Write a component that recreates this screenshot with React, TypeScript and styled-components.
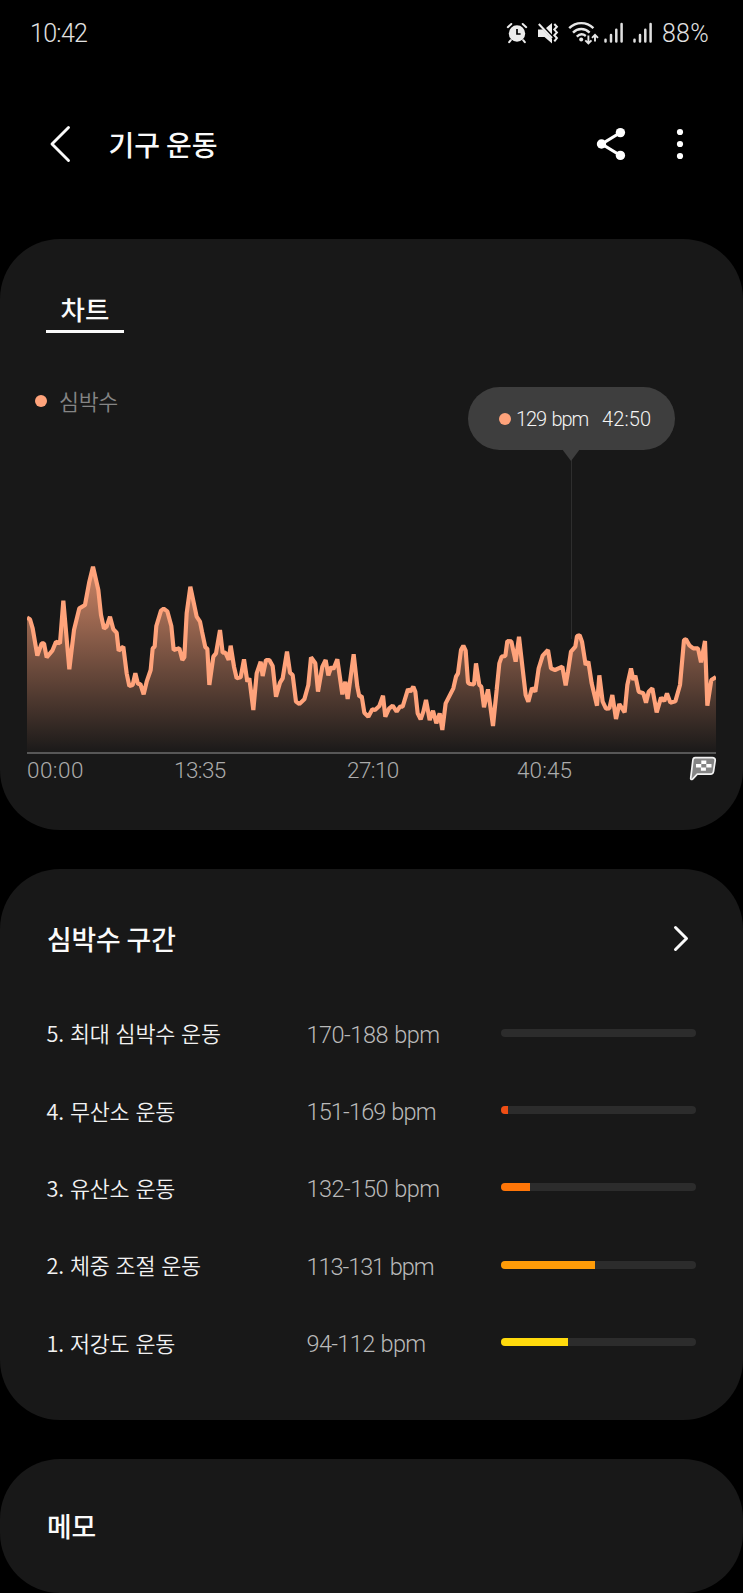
import React from "react";
import styled, { createGlobalStyle } from "styled-components";

const GlobalStyle = createGlobalStyle`
  * { box-sizing: border-box; }
  html, body { margin: 0; background: #000; }
  body { font-family: Roboto, "Noto Sans CJK KR", sans-serif; color: #f4f4f4; }
  svg { display: block; flex: none; }
`;

const Screen = styled.div`
  width: 743px;
  height: 1593px;
  overflow: hidden;
  background: #000;
  display: flex;
  flex-direction: column;
`;

const StatusBar = styled.header`
  flex: none;
  height: 66px;
  padding: 0 34px 0 30px;
  display: flex;
  align-items: center;
  justify-content: space-between;
  color: #e2e2e2;
`;

const StatusText = styled.span<{ $spacing: number }>`
  font-size: 25px;
  font-weight: 300;
  line-height: 30px;
  letter-spacing: ${(p) => p.$spacing}px;
  padding-top: 1px;
  white-space: nowrap;
`;

const StatusIcons = styled.div`
  display: flex;
  align-items: center;
  gap: 9px;
`;

const WifiGroup = styled.div`
  display: flex;
  align-items: center;
  gap: 4px;
`;

const AppBar = styled.div`
  flex: none;
  height: 173px;
  padding: 0 59px 17px 48px;
  display: flex;
  align-items: center;
`;

const Title = styled.h1`
  margin: 0 auto 0 36.5px;
  padding-bottom: 1px;
  font: 500 28px/40px "Noto Sans CJK KR", sans-serif;
  letter-spacing: -0.1px;
  color: #fafafa;
`;

const Actions = styled.div`
  display: flex;
  align-items: center;
  gap: 50px;
`;

const Card = styled.section<{ $height: number }>`
  height: ${(p) => p.$height}px;
  flex: none;
  border-radius: 60px;
  background: #181818;
  & + & { margin-top: 39px; }
`;

const Tab = styled.div`
  width: 78px;
  height: 94px;
  margin-left: 46px;
  padding-top: 50px;
  border-bottom: 3px solid #fafafa;
  text-align: center;
  font: 500 26.5px/40px "Noto Sans CJK KR", sans-serif;
  color: #fafafa;
`;

const ChartArea = styled.div`
  position: relative;
  margin: 0 27px;
  padding-top: 53px;
`;

const Legend = styled.div`
  display: flex;
  align-items: center;
  gap: 12px;
  height: 30px;
  margin-left: 8px;
  margin-bottom: 144px;
  font: 350 21.7px/30px "Noto Sans CJK KR", sans-serif;
  letter-spacing: -0.3px;
  color: #858585;
`;

const Dot = styled.i`
  width: 12px;
  height: 12px;
  flex: none;
  border-radius: 50%;
  background: #ffa37b;
`;

const Guide = styled.div`
  position: absolute;
  left: 544px;
  top: 124px;
  width: 1px;
  height: 182px;
  background: #2e2e2e;
`;

const Tooltip = styled.div`
  position: absolute;
  left: 441px;
  top: 54px;
  width: 207px;
  height: 63px;
  padding-left: 31px;
  border-radius: 32px;
  background: #3e3e3e;
  display: flex;
  align-items: center;
  font-size: 20px;
  font-weight: 300;
  color: #f4f4f4;
  white-space: nowrap;
  &::after {
    content: "";
    position: absolute;
    left: 94px;
    top: 62px;
    border: solid transparent;
    border-width: 12px 9.5px 0;
    border-top-color: #3e3e3e;
  }
`;

const TooltipValue = styled.span`
  margin: 1px 0 0 5px;
  width: 86px;
  letter-spacing: -1.1px;
  word-spacing: 1.8px;
`;

const TooltipTime = styled.span`
  margin-top: 1px;
  letter-spacing: 0.15px;
`;

const TimeAxis = styled.div`
  display: grid;
  grid-template-columns: 147px 173px 170px 172px 27px;
  border-top: 2px solid #575757;
  padding-top: 2px;
  font-size: 22.5px;
  font-weight: 300;
  line-height: 28px;
  color: #acacac;
`;

const TimeLabel = styled.span<{ $spacing: number }>`
  letter-spacing: ${(p) => p.$spacing}px;
`;

const CardHeader = styled.div<{ $height: number }>`
  display: flex;
  align-items: center;
  justify-content: space-between;
  height: ${(p) => p.$height}px;
  padding: 0 54px 0 47px;
`;

const CardTitle = styled.h2`
  margin: 0;
  font: 500 26.8px/40px "Noto Sans CJK KR", sans-serif;
  letter-spacing: -0.1px;
  color: #fafafa;
`;

const Zones = styled.div`
  margin-top: -15px;
`;

const ZoneRow = styled.div`
  display: grid;
  grid-template-columns: 260px 194.5px 195px;
  align-items: center;
  height: 77.4px;
  margin-left: 46.5px;
  white-space: nowrap;
`;

const ZoneName = styled.span`
  padding-top: 1px;
  font: 350 21.8px/30px "Noto Sans CJK KR", sans-serif;
  letter-spacing: -0.2px;
  word-spacing: 1.3px;
  color: #f2f2f2;
`;

const ZoneRange = styled.span<{ $spacing: number }>`
  padding-top: 4px;
  font-size: 23.5px;
  font-weight: 300;
  line-height: 30px;
  letter-spacing: ${(p) => p.$spacing}px;
  word-spacing: 1px;
  color: #bababa;
`;

const Track = styled.div`
  height: 8px;
  border-radius: 4px;
  overflow: hidden;
  background: #2c2c2c;
`;

const Fill = styled.div<{ $color: string }>`
  height: 100%;
  background: ${(p) => p.$color};
`;

const heartRate =
  "21,203 30,208 38,235 52,317 65,280 72,280 80,322 97,302 108,275 120,280 130,152 148,358 162,240 178,175 195,165 208,95 219,50 235,120 243,195 252,236 260,230 270,200 280,238 290,248 296,302 310,290 320,370 328,408 338,405 346,370 354,402 361,402 371,433 380,395 392,360 398,295 404,290 409,228 423,182 431,176 442,184 454,228 461,300 478,295 487,330 493,322 500,190 511,110 530,200 540,215 546,245 556,292 562,296 568,405 580,320 588,310 600,240 608,308 616,308 626,330 632,287 642,350 650,385 662,382 672,328 682,395 688,385 700,480 710,370 722,335 728,378 738,330 748,330 758,348 768,440 780,398 788,385 801,305 810,368 818,375 828,455 838,462 853,448 865,405 873,322 886,340 894,425 907,350 917,330 925,376 934,350 940,358 952,328 967,433 976,395 983,447 1001,313 1012,410 1018,440 1025,438 1033,488 1045,500 1057,478 1065,480 1078,468 1089,437 1096,500 1107,476 1118,467 1130,485 1140,470 1148,470 1164,417 1171,425 1180,410 1186,425 1193,490 1202,508 1210,485 1218,450 1229,510 1239,482 1249,520 1259,490 1267,540 1277,460 1300,415 1308,380 1314,370 1323,300 1330,287 1337,302 1344,398 1350,402 1362,403 1368,340 1378,405 1384,410 1392,472 1404,418 1419,528 1430,420 1438,340 1445,320 1456,318 1462,273 1474,274 1487,335 1497,260 1506,340 1517,435 1525,455 1536,414 1546,425 1556,355 1568,317 1584,300 1593,355 1605,360 1627,350 1637,406 1644,365 1653,305 1666,290 1671,258 1679,256 1686,275 1697,345 1705,335 1715,400 1731,467 1738,376 1748,455 1758,476 1768,475 1777,435 1788,507 1798,462 1814,487 1822,405 1833,355 1840,390 1846,377 1856,425 1870,430 1878,458 1886,425 1897,415 1910,487 1923,443 1933,453 1941,430 1951,458 1966,454 1980,405 1992,270 1998,268 2008,286 2020,295 2034,295 2043,337 2055,273 2062,467 2074,390 2088,381";

const zones = [
  { name: "5. 최대 심박수 운동", range: "170-188 bpm", spacing: -0.5, color: "#f03a10", percent: 0 },
  { name: "4. 무산소 운동", range: "151-169 bpm", spacing: -0.85, color: "#f04e14", percent: 3.4 },
  { name: "3. 유산소 운동", range: "132-150 bpm", spacing: -0.5, color: "#ff7608", percent: 15 },
  { name: "2. 체중 조절 운동", range: "113-131 bpm", spacing: -1.05, color: "#ff9c08", percent: 48 },
  { name: "1. 저강도 운동", range: "94-112 bpm", spacing: -0.65, color: "#ffda0c", percent: 34.2 },
];

const AlarmIcon = () => (
  <svg width="22" height="22" viewBox="0 0 22 22" fill="none" stroke="#ededed" strokeLinecap="round">
    <circle cx="11" cy="11.5" r="8.2" fill="#ededed" stroke="none" />
    <path d="M1.8 5.2 5.3 2M20.2 5.2 16.7 2M4.8 18.2 3.2 20.2M17.2 18.2l1.6 2" strokeWidth="2" />
    <path d="M11 7v5h3.6" stroke="#000" strokeWidth="1.7" strokeLinecap="butt" />
  </svg>
);

const MuteIcon = () => (
  <svg width="22" height="22" viewBox="0 0 22 22" fill="none">
    <path d="M1 7.5h5L15 17v4.5L7.5 15H1zM9 6 15 1v11.5z" fill="#ededed" />
    <path d="M1.8 2 15 16" stroke="#ededed" strokeWidth="2" />
    <path d="m17.3 2 2.6 2.8-2.6 2.8 2.6 2.8-2.6 2.8 2.6 2.8-2.6 3.4" stroke="#ededed" strokeWidth="2" />
  </svg>
);

const WifiIcon = () => (
  <svg width="32" height="24" viewBox="0 0 32 24" fill="none" stroke="#e6e6e6" strokeWidth="2.4">
    <path d="M1.2 7.2c6.8-6.8 17.4-6.8 24.2 0M5 11.6c4.8-4.8 11.8-4.8 16.6 0M8.8 15.6c2.7-2.6 6.3-2.7 9-.6" />
    <circle cx="13.2" cy="18.4" r="2" fill="#e6e6e6" stroke="none" />
    <path d="M20.4 14.5v7.5M17.3 19.4l3.1 3.1 3.1-3.1M27 20.5V14M24 16.8l3-3 3 3" strokeWidth="1.9" />
  </svg>
);

const SignalIcon = () => (
  <svg width="20" height="22" viewBox="0 0 20 22" stroke="#e0e0e0" strokeWidth="2.5" strokeLinecap="round">
    <path d="M1.5 17.8v1.8M7 13v6.6M12.3 7.7v11.9M17.6 2v17.6" />
  </svg>
);

const FlagIcon = () => (
  <svg width="28" height="25" viewBox="0 0 28 25">
    <path
      d="M6.2 1.6h17.2c1.8 0 3 1.2 2.8 2.9l-1.7 11c-.2 1.6-1.4 2.6-3 2.6H8.3l-4.7 5c-1 .8-2 .3-1.9-.8L3.9 4C4.1 2.5 4.8 1.6 6.2 1.6z"
      fill="#858585"
      stroke="#f2f2f2"
      strokeWidth="1.7"
      strokeLinejoin="round"
    />
    <path d="M12.3 4.5h5v3.5h-5zM7 8h5.3v3.4H7zM17.3 8h5.2v3.4h-5.2zM11.9 11.4h5v3.4h-5z" fill="#fff" />
  </svg>
);

const HeartRateChart = () => (
  <svg width="689" height="192" viewBox="21 30 2067 576">
    <defs>
      <linearGradient id="area" gradientUnits="userSpaceOnUse" x1="0" y1="40" x2="0" y2="600">
        <stop offset="0" stopColor="#ffa37b" stopOpacity=".8" />
        <stop offset="1" stopColor="#ffa37b" stopOpacity=".02" />
      </linearGradient>
    </defs>
    <polygon points={`21,606 ${heartRate} 2088,606`} fill="url(#area)" />
    <polyline points={heartRate} fill="none" stroke="#ffa37b" strokeWidth="12.5" strokeLinejoin="bevel" />
  </svg>
);

export default function App() {
  return (
    <Screen>
      <GlobalStyle />
      <StatusBar>
        <StatusText $spacing={-0.7}>10:42</StatusText>
        <StatusIcons>
          <AlarmIcon />
          <MuteIcon />
          <WifiGroup>
            <WifiIcon />
            <SignalIcon />
          </WifiGroup>
          <SignalIcon />
          <StatusText $spacing={0.3}>88%</StatusText>
        </StatusIcons>
      </StatusBar>
      <AppBar>
        <svg width="24" height="38" viewBox="0 0 24 38" fill="none" stroke="#fafafa" strokeWidth="2.9" strokeLinecap="round" strokeLinejoin="round">
          <path d="M20.5 2.5 4 19l16.5 16.5" />
        </svg>
        <Title>기구 운동</Title>
        <Actions>
          <svg width="30" height="34" viewBox="0 0 30 34" fill="#fff">
            <path d="M24.5 5.5 5.8 17l18.7 11.5" fill="none" stroke="#fff" strokeWidth="3.2" />
            <circle cx="5.5" cy="17" r="4.7" />
            <circle cx="24.4" cy="5.6" r="4.7" />
            <circle cx="24.4" cy="28.4" r="4.7" />
          </svg>
          <svg width="8" height="34" viewBox="0 0 8 34" fill="#fff">
            <circle cx="4" cy="5" r="3.1" />
            <circle cx="4" cy="17" r="3.1" />
            <circle cx="4" cy="29" r="3.1" />
          </svg>
        </Actions>
      </AppBar>

      <Card $height={591}>
        <Tab>차트</Tab>
        <ChartArea>
          <Legend>
            <Dot />
            심박수
          </Legend>
          <Guide />
          <Tooltip>
            <Dot />
            <TooltipValue>129 bpm</TooltipValue>
            <TooltipTime>42:50</TooltipTime>
          </Tooltip>
          <HeartRateChart />
          <TimeAxis>
            <TimeLabel $spacing={0.45}>00:00</TimeLabel>
            <TimeLabel $spacing={-0.6}>13:35</TimeLabel>
            <TimeLabel $spacing={-0.6}>27:10</TimeLabel>
            <TimeLabel $spacing={0.1}>40:45</TimeLabel>
            <FlagIcon />
          </TimeAxis>
        </ChartArea>
      </Card>

      <Card $height={551}>
        <CardHeader $height={140}>
          <CardTitle>심박수 구간</CardTitle>
          <svg width="16" height="28" viewBox="0 0 16 28" fill="none" stroke="#fafafa" strokeWidth="3" strokeLinecap="round" strokeLinejoin="round">
            <path d="M2.5 2.500 13.500 13.500l-11 11" />
          </svg>
        </CardHeader>
        <Zones>
          {zones.map((z) => (
            <ZoneRow key={z.name}>
              <ZoneName>{z.name}</ZoneName>
              <ZoneRange $spacing={z.spacing}>{z.range}</ZoneRange>
              <Track>
                <Fill $color={z.color} style={{ width: `${z.percent}%` }} />
              </Track>
            </ZoneRow>
          ))}
        </Zones>
      </Card>

      <Card $height={134}>
        <CardHeader $height={134}>
          <CardTitle>메모</CardTitle>
        </CardHeader>
      </Card>
    </Screen>
  );
}
